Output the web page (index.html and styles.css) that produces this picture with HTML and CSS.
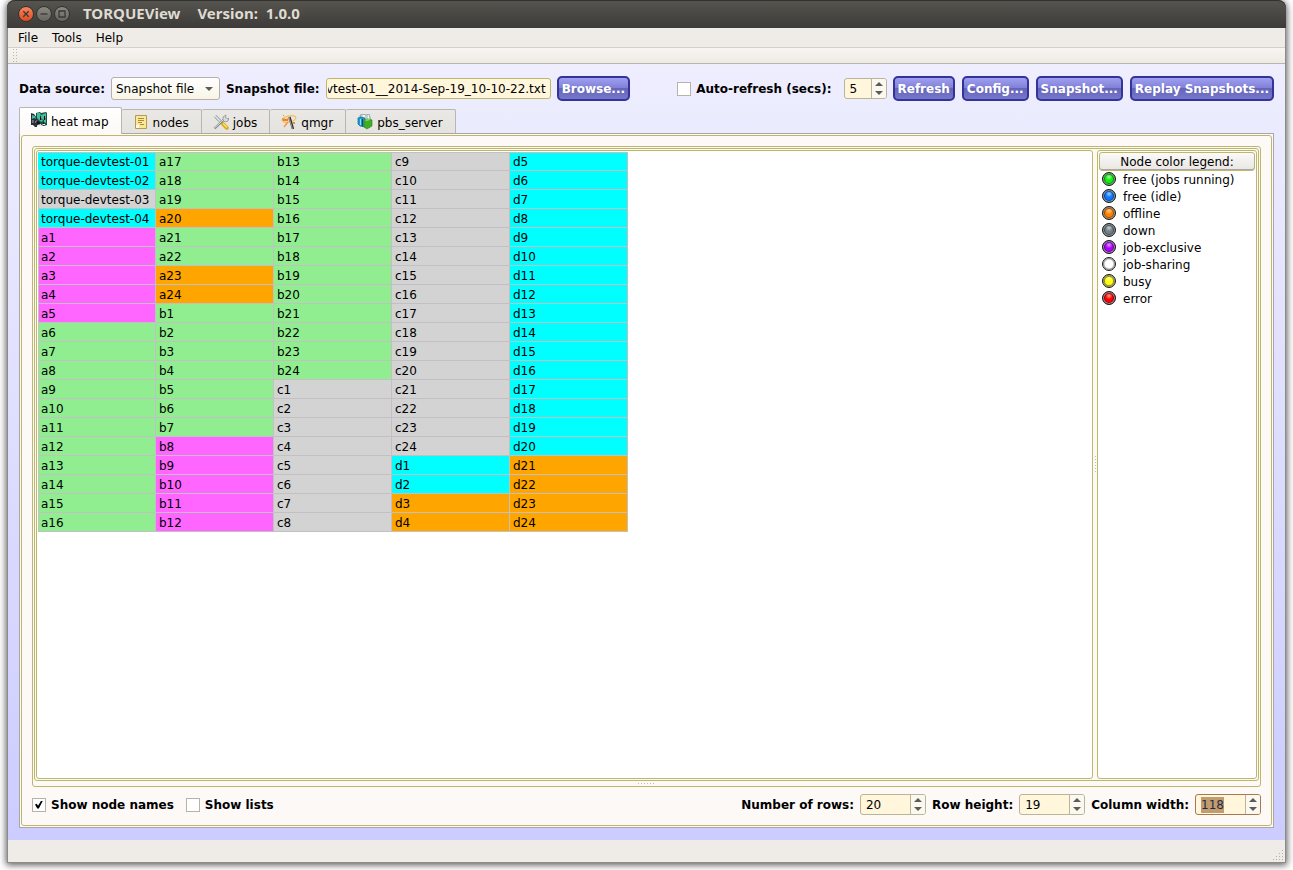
FILE: index.html
```html
<!DOCTYPE html>
<html lang="en">
<head>
<meta charset="utf-8">
<title>TORQUEView</title>
<link rel="stylesheet" href="styles.css">
</head>
<body>
<div class="window">
  <header class="titlebar">
    <div class="window-buttons">
      <button class="wbtn wbtn-close" aria-label="Close"><svg viewBox="0 0 14 14"><path d="M4.3 4.3l5.4 5.4M9.7 4.3l-5.4 5.4"/></svg></button>
      <button class="wbtn" aria-label="Minimize"><svg viewBox="0 0 14 14"><path d="M3.5 7h7"/></svg></button>
      <button class="wbtn" aria-label="Maximize"><svg viewBox="0 0 14 14"><path d="M4 4h6v6H4z"/></svg></button>
    </div>
    <h1 class="title"><span>TORQUEView</span><span>Version:&nbsp; 1.0.0</span></h1>
  </header>
  <nav class="menubar">
    <button class="menu">File</button><button class="menu">Tools</button><button class="menu">Help</button>
  </nav>
  <div class="toolbar"><svg class="grip" viewBox="0 0 5 15"><path stroke="#bcb8b0" stroke-dasharray="1 2" d="M.5 1v14M3.5 1v14"/></svg></div>

  <main class="content">
    <div class="source-row">
      <label class="lbl" for="source">Data source:</label>
      <span class="select-wrap"><select id="source" class="select"><option>Snapshot file</option></select></span>
      <label class="lbl" for="file">Snapshot file:</label>
      <input id="file" class="file-input" type="text" value="vtest-01__2014-Sep-19_10-10-22.txt">
      <button class="btn">Browse...</button>
      <span class="spacer"></span>
      <label class="check lbl"><input type="checkbox">Auto-refresh (secs):</label>
      <span class="spin spin-small">
        <span class="spin-field"><input type="text" value="5" aria-label="Auto-refresh seconds"></span>
        <span class="spin-btns"><button class="up" aria-label="Increase"></button><button class="down" aria-label="Decrease"></button></span>
      </span>
      <button class="btn">Refresh</button>
      <button class="btn">Config...</button>
      <button class="btn">Snapshot...</button>
      <button class="btn">Replay Snapshots...</button>
    </div>

    <div class="tabs" role="tablist">
      <button class="tab tab-active" role="tab" aria-selected="true">
        <svg class="ticon ticon-high" viewBox="0 0 16 16"><path fill="#1c5146" d="M5 1l4-1 1 1 5-1 1 1v12l-3 1-3-1-3 1-2-1z"/><path fill="#2a2f35" d="M0 1l3 1 3 4v9l-2 0-2-2-2 0z"/><path fill="#43bd9c" d="M6 1h3l1 2 5-2v5l-2 2-2-1-2 2-3-3zM1 3l3 1 1 3-2-1-2 1zM9 8l2-1 1 2-2 1zM13 8l2-1v4l-2-1z"/><path fill="#101418" d="M9 3l1 2v3H9zM13 4h1v4h-1zM6 9l3 1v4l-3-1zM12 10l1 1v3l-1-1z"/><path fill="#a04a3c" d="M2 8h1v3H2zM5 8h1v2H5zM10 6h1v2h-1z"/><path fill="#f0f4f2" d="M6 13l4-1v1l-3 2zM11 12l3 0v1l-2 0z"/><path fill="#4b84b4" d="M1 8h1v3H1zM4 9h1v2H4z"/></svg>heat map</button>
      <button class="tab" role="tab">
        <svg class="ticon" viewBox="0 0 16 16"><path fill="#fbe795" stroke="#b39a55" d="M2.5 1.5h11v13h-11z"/><path stroke="#a98d42" d="M5 4.5h6M5 6.5h6M5 8.5h4M7 10.5h4"/><path fill="#fffbe6" d="M3 11h3v3H3z"/></svg>nodes</button>
      <button class="tab" role="tab">
        <svg class="ticon" viewBox="0 0 16 16"><path stroke="#8a8f8f" stroke-width="3" d="M2 2l7 7"/><path stroke="#e6e9e8" stroke-width="1.6" d="M1.5 1.5l7.5 7.5"/><path stroke="#d9a81a" stroke-width="3.8" stroke-linecap="round" d="M10 10l3.8 3.8"/><path stroke="#ffe36b" stroke-width="1.4" d="M10 9.5l4 4"/><path stroke="#81898a" stroke-width="2.4" d="M1.5 14.5l9.5-9"/><path stroke="#e3e8e8" d="M1.5 14l9.5-9"/><path fill="#d6dbda" stroke="#858b8b" stroke-width=".7" d="M10 6V3l3-2-.5 2.5L15 5l1-1-1 3-3 1z"/></svg>jobs</button>
      <button class="tab" role="tab">
        <svg class="ticon" viewBox="0 0 16 16"><ellipse cx="8" cy="5" rx="7" ry="3" fill="none" stroke="#f9be4a" stroke-width="1.2" transform="rotate(-12 8 5)"/><path stroke="#2d2d2d" stroke-width="2.4" d="M8.5 3l3.5 12"/><path stroke="#c9c9c9" stroke-width=".7" d="M8 3l3.5 12"/><path fill="#ef812b" d="M1 4l4 1 3-1-1 3-2 0-3 0z"/><path stroke="#f5935a" stroke-width="1.4" d="M3 13l4-5"/><path fill="#f08a3c" d="M12 8h2v2h-2zM2 1h1v1H2z"/></svg>qmgr</button>
      <button class="tab" role="tab">
        <svg class="ticon" viewBox="0 0 16 16"><path fill="#c4d0d4" stroke="#7b8b90" stroke-width=".6" d="M3 1l3-1 3 1 3-1 2 6H4z"/><path fill="#f0f4f4" d="M6 1h2v4H6zM11 1h1v4h-1z"/><path fill="#1c9bd0" stroke="#176588" stroke-width=".7" d="M1 4l2-1 5 1v9l-5-1-2-2z"/><path fill="#8be0f4" d="M3 5h1v6H3z"/><path fill="#0d4668" d="M5 5h1v7H5z"/><path fill="#3fae26" stroke="#287e19" stroke-width=".6" d="M7 6l4-1 4 1v6l-5 3-3-2z"/><path fill="#88df4d" d="M7 6l4-1 3 .5-4 1.5z"/></svg>pbs_server</button>
    </div>

    <section class="panel">
      <div class="panel-inner">
        <div class="frame-outer">
          <div class="frame-mid">
            <div class="map-pane">
              <table class="map">
                <tr><td class="idle">torque-devtest-01</td><td class="run">a17</td><td class="run">b13</td><td class="down-node">c9</td><td class="idle">d5</td></tr>
                <tr><td class="idle">torque-devtest-02</td><td class="run">a18</td><td class="run">b14</td><td class="down-node">c10</td><td class="idle">d6</td></tr>
                <tr><td class="down-node">torque-devtest-03</td><td class="run">a19</td><td class="run">b15</td><td class="down-node">c11</td><td class="idle">d7</td></tr>
                <tr><td class="idle">torque-devtest-04</td><td class="off">a20</td><td class="run">b16</td><td class="down-node">c12</td><td class="idle">d8</td></tr>
                <tr><td class="excl">a1</td><td class="run">a21</td><td class="run">b17</td><td class="down-node">c13</td><td class="idle">d9</td></tr>
                <tr><td class="excl">a2</td><td class="run">a22</td><td class="run">b18</td><td class="down-node">c14</td><td class="idle">d10</td></tr>
                <tr><td class="excl">a3</td><td class="off">a23</td><td class="run">b19</td><td class="down-node">c15</td><td class="idle">d11</td></tr>
                <tr><td class="excl">a4</td><td class="off">a24</td><td class="run">b20</td><td class="down-node">c16</td><td class="idle">d12</td></tr>
                <tr><td class="excl">a5</td><td class="run">b1</td><td class="run">b21</td><td class="down-node">c17</td><td class="idle">d13</td></tr>
                <tr><td class="run">a6</td><td class="run">b2</td><td class="run">b22</td><td class="down-node">c18</td><td class="idle">d14</td></tr>
                <tr><td class="run">a7</td><td class="run">b3</td><td class="run">b23</td><td class="down-node">c19</td><td class="idle">d15</td></tr>
                <tr><td class="run">a8</td><td class="run">b4</td><td class="run">b24</td><td class="down-node">c20</td><td class="idle">d16</td></tr>
                <tr><td class="run">a9</td><td class="run">b5</td><td class="down-node">c1</td><td class="down-node">c21</td><td class="idle">d17</td></tr>
                <tr><td class="run">a10</td><td class="run">b6</td><td class="down-node">c2</td><td class="down-node">c22</td><td class="idle">d18</td></tr>
                <tr><td class="run">a11</td><td class="run">b7</td><td class="down-node">c3</td><td class="down-node">c23</td><td class="idle">d19</td></tr>
                <tr><td class="run">a12</td><td class="excl">b8</td><td class="down-node">c4</td><td class="down-node">c24</td><td class="idle">d20</td></tr>
                <tr><td class="run">a13</td><td class="excl">b9</td><td class="down-node">c5</td><td class="idle">d1</td><td class="off">d21</td></tr>
                <tr><td class="run">a14</td><td class="excl">b10</td><td class="down-node">c6</td><td class="idle">d2</td><td class="off">d22</td></tr>
                <tr><td class="run">a15</td><td class="excl">b11</td><td class="down-node">c7</td><td class="off">d3</td><td class="off">d23</td></tr>
                <tr><td class="run">a16</td><td class="excl">b12</td><td class="down-node">c8</td><td class="off">d4</td><td class="off">d24</td></tr>
              </table>
            </div>
            <div class="split-v"><span></span></div>
            <aside class="legend">
              <h2 class="legend-head">Node color legend:</h2>
              <ul class="legend-list">
                <li><i class="led led-green"></i>free (jobs running)</li>
                <li><i class="led led-blue"></i>free (idle)</li>
                <li><i class="led led-orange"></i>offline</li>
                <li><i class="led led-grey"></i>down</li>
                <li><i class="led led-purple"></i>job-exclusive</li>
                <li><i class="led led-white"></i>job-sharing</li>
                <li><i class="led led-yellow"></i>busy</li>
                <li><i class="led led-red"></i>error</li>
              </ul>
            </aside>
          </div>
          <div class="split-h"><span></span></div>
        </div>

        <div class="options">
          <label class="check lbl"><input type="checkbox" checked>Show node names</label>
          <label class="check lbl"><input type="checkbox">Show lists</label>
          <span class="spacer"></span>
          <label class="lbl" for="rows">Number of rows:</label>
          <span class="spin">
            <span class="spin-field"><input id="rows" type="text" value="20"></span>
            <span class="spin-btns"><button class="up" aria-label="Increase"></button><button class="down" aria-label="Decrease"></button></span>
          </span>
          <label class="lbl" for="rheight">Row height:</label>
          <span class="spin">
            <span class="spin-field"><input id="rheight" type="text" value="19"></span>
            <span class="spin-btns"><button class="up" aria-label="Increase"></button><button class="down" aria-label="Decrease"></button></span>
          </span>
          <label class="lbl" for="cwidth">Column width:</label>
          <span class="spin spin-focus">
            <span class="spin-field"><input id="cwidth" type="text" value="118"></span>
            <span class="spin-btns"><button class="up" aria-label="Increase"></button><button class="down" aria-label="Decrease"></button></span>
          </span>
        </div>
      </div>
    </section>
  </main>
  <footer class="statusbar">
    <svg class="resize" viewBox="0 0 12 12"><path fill="#b5b2ab" d="M9 0h1v1H9zM6 3h1v1H6zM9 3h1v1H9zM3 6h1v1H3zM6 6h1v1H6zM9 6h1v1H9zM0 9h1v1H0zM3 9h1v1H3zM6 9h1v1H6zM9 9h1v1H9z"/></svg>
  </footer>
</div>
</body>
</html>
```

FILE: styles.css
```css
* { box-sizing: border-box; }

body {
  margin: 0;
  min-height: 100vh;
  padding: 0 7px 7px;
  display: flex;
  background: #fff;
  color: #000;
  font: 12px/14px "DejaVu Sans", sans-serif;
}

button, input, select { font: inherit; color: inherit; margin: 0; padding: 0; border: 0; }

.window {
  flex: 1;
  min-width: 0;
  display: flex;
  flex-direction: column;
  border: 1px solid #8d8b86;
  border-top: 0;
  border-radius: 8px 8px 0 0;
  background: #efebe7;
  box-shadow: 0 1px 7px 1px rgba(0, 0, 0, .65);
}

/* title bar */
.titlebar {
  height: 28px;
  margin: 0 -1px;
  padding: 0 11px 2px;
  display: flex;
  align-items: center;
  gap: 13px;
  border-radius: 8px 8px 0 0;
  box-shadow: inset 0 1px #32312d;
  background: linear-gradient(#565550, #3c3b37);
}
.window-buttons { display: flex; gap: 2px; padding-top: 1px; }
.wbtn {
  width: 16px;
  height: 16px;
  border-radius: 8px;
  border: 1px solid #33322e;
  background: linear-gradient(#8b8982, #66645e);
}
.wbtn svg { display: block; width: 14px; height: 14px; fill: none; stroke: #3a3935; stroke-width: 1.3; }
.wbtn-close { background: linear-gradient(#f58560, #df4b1e); }
.title {
  margin: 0;
  display: flex;
  gap: 17px;
  color: #dfdbd2;
  font: bold 15px/20px "Noto Sans", sans-serif;
}

/* menu and tool bars */
.menubar { height: 20px; padding: 0 10px; display: flex; gap: 14px; border-bottom: 1px solid #d5d0c8; background: #efebe7; }
.menu { padding-top: 1px; background: none; line-height: 18px; }
.toolbar { height: 16px; padding: 0 5px; border-bottom: 1px solid #bab5ab; background: linear-gradient(#f8f5f2, #eeeae5); }
.grip { display: block; width: 5px; height: 15px; }

/* content */
.content {
  flex: 1;
  display: flex;
  flex-direction: column;
  padding: 12px 11px;
  background: linear-gradient(#eeeeff, #ccccff);
}
.source-row, .options { display: flex; align-items: center; gap: 6px; }
.source-row { height: 25px; }
.lbl { font-weight: bold; white-space: nowrap; }
.spacer { flex: 1; }

.select-wrap { position: relative; display: flex; }
.select-wrap::after {
  content: "";
  position: absolute;
  right: 7px;
  top: 10px;
  border: 4px solid transparent;
  border-top-color: #5b5b57;
  border-bottom: 0;
  pointer-events: none;
}
.select {
  appearance: none;
  width: 109px;
  height: 23px;
  padding: 0 4px;
  border: 1px solid #b6b1a1;
  border-radius: 3px;
  background: linear-gradient(#fff, #f8f4e6);
}
.file-input {
  width: 225px;
  height: 21px;
  padding: 0 4px 0 1px;
  direction: rtl;
  border: 1px solid #bdb76b;
  border-radius: 3px;
  background: #fff6dc;
}
.btn {
  height: 25px;
  padding: 0 3px;
  border: 2px solid #333399;
  border-radius: 5px;
  color: #fff;
  font-weight: bold;
  white-space: nowrap;
  background: linear-gradient(#a0a0f0, #8080d8 46%, #6565b8 50%, #7676cb);
}
.btn + .btn { margin-left: 1px; }

/* check boxes */
.check { display: flex; align-items: center; gap: 5px; }
.check input {
  appearance: none;
  display: grid;
  place-items: center;
  width: 14px;
  height: 14px;
  border: 1px solid #b8b2aa;
  background: #fff;
}
.check input:checked::after {
  content: "";
  width: 8px;
  height: 8px;
  background: #000;
  clip-path: polygon(0 50%, 22% 42%, 38% 66%, 78% 0, 100% 0, 48% 100%, 28% 100%);
}
.options .check + .check { margin-left: 6px; }

/* spin boxes */
.spin {
  width: 66px;
  height: 21px;
  display: flex;
  border: 1px solid #b9b49a;
  border-radius: 3px;
  overflow: hidden;
  background: #fff6dc;
}
.spin-small { width: 43px; margin-left: 6px; }
.spin-field { flex: 1; min-width: 0; display: flex; align-items: center; padding-left: 5px; }
.spin-field input { width: 100%; height: 16px; background: transparent; }
.spin-btns { width: 15px; display: flex; flex-direction: column; border-left: 1px solid #b9b49a; background: #fbf8ef; }
.spin-btns button { flex: 1; display: flex; justify-content: center; align-items: center; background: none; }
.spin-btns button::before { content: ""; border: 4px solid transparent; }
.spin-btns .up::before { border-top: 0; border-bottom-color: #5b5b57; }
.spin-btns .down::before { border-bottom: 0; border-top-color: #5b5b57; }
.spin-focus { border-color: #a87850; }
.spin-focus .spin-field input { width: 23px; background: #c39c6b; color: #1c2c50; }

/* tabs */
.tabs { display: flex; align-items: flex-end; margin-top: 6px; }
.tab {
  height: 24px;
  padding: 2px 12px 0 11px;
  display: flex;
  align-items: center;
  gap: 4px;
  border: 1px solid #b9b6b0;
  border-left-width: 0;
  border-bottom: 0;
  border-radius: 2px 2px 0 0;
  background: linear-gradient(#eae8e4, #e5e3df);
}
.tab-active {
  position: relative;
  height: 27px;
  margin-bottom: -1px;
  padding: 1px 12px 0 11px;
  border-left-width: 1px;
  background: linear-gradient(#fff, #fcf9f6);
}
.ticon { width: 16px; height: 16px; fill: none; margin-bottom: 1px; }
.ticon-high { margin-bottom: 3px; }

/* panel and nested frames */
.panel {
  flex: 1;
  display: flex;
  padding: 1px;
  border: 1px solid #aaa6a8;
  background: #fcf9f6;
}
.panel-inner {
  flex: 1;
  min-width: 0;
  display: flex;
  flex-direction: column;
  padding: 10px;
  border: 1px solid #bdb76b;
  border-radius: 3px;
}
.frame-outer {
  flex: 1;
  display: flex;
  flex-direction: column;
  padding: 1px 1px 0;
  border: 1px solid #bdb76b;
  border-radius: 3px;
}
.frame-mid { flex: 1; display: flex; padding: 1px; border: 1px solid #bdb76b; border-radius: 3px; }
.map-pane { flex: 1; min-width: 0; padding: 1px; border: 1px solid #bdb76b; border-radius: 3px; background: #fff; }
.split-v { width: 4px; display: flex; align-items: center; justify-content: center; }
.split-v span { width: 1px; height: 17px; background: repeating-linear-gradient(#bbb 0 1px, transparent 1px 3px); }
.split-h { height: 5px; display: flex; align-items: center; justify-content: center; }
.split-h span { width: 17px; height: 1px; background: repeating-linear-gradient(90deg, #bbb 0 1px, transparent 1px 3px); }

.map {
  width: 590px;
  table-layout: fixed;
  border-spacing: 0;
}
.map td {
  height: 19px;
  padding: 2px 2px 0 3px;
  border: solid #c3c0c3;
  border-width: 0 1px 1px 0;
  line-height: 16px;
  white-space: nowrap;
}
.map td:first-child { box-shadow: inset 1px 0 #c3c0c3; }
.map tr:first-child td { box-shadow: inset 0 1px #c3c0c3; }
.idle { background: #00ffff; }
.run { background: #90ee90; }
.down-node { background: #d3d3d3; }
.off { background: #ffa500; }
.excl { background: #ff66ff; }

/* legend */
.legend { width: 160px; padding: 1px; border: 1px solid #bdb76b; border-radius: 3px; background: #fff; }
.legend-head {
  height: 19px;
  margin: 0;
  border: 1px solid #bdb76b;
  border-radius: 3px;
  box-shadow: inset 0 -1px #aaa7a4;
  background: linear-gradient(#fbfaf9, #e9e6e2);
  font: 12px/18px "DejaVu Sans", sans-serif;
  text-align: center;
}
.legend-list { margin: 0; padding: 0 3px; list-style: none; }
.legend-list li { height: 17px; display: flex; align-items: center; gap: 7px; }
.led {
  width: 14px;
  height: 14px;
  margin-bottom: 2px;
  border: 1px solid #1a1a1a;
  border-radius: 7px;
  box-shadow: inset 0 0 0 1px #999, inset 0 0 0 2px rgba(0, 0, 0, .4);
  background-image: radial-gradient(circle at 50% 32%, rgba(255, 255, 255, .6), transparent 35%);
}
.led-green { background-color: #10f010; }
.led-blue { background-color: #0a78ff; }
.led-orange { background-color: #ff8000; }
.led-grey { background-color: #708088; }
.led-purple { background-color: #b000ff; }
.led-white { background-color: #fff; box-shadow: inset 0 0 0 1px #999, inset 0 0 0 2px rgba(0, 0, 0, .15); }
.led-yellow { background-color: #ffff00; }
.led-red { background-color: #ff0000; }

.options { height: 21px; margin-top: 7px; }

.statusbar { height: 22px; display: flex; align-items: flex-end; justify-content: flex-end; background: #efebe7; }
.resize { width: 12px; height: 12px; }
```
